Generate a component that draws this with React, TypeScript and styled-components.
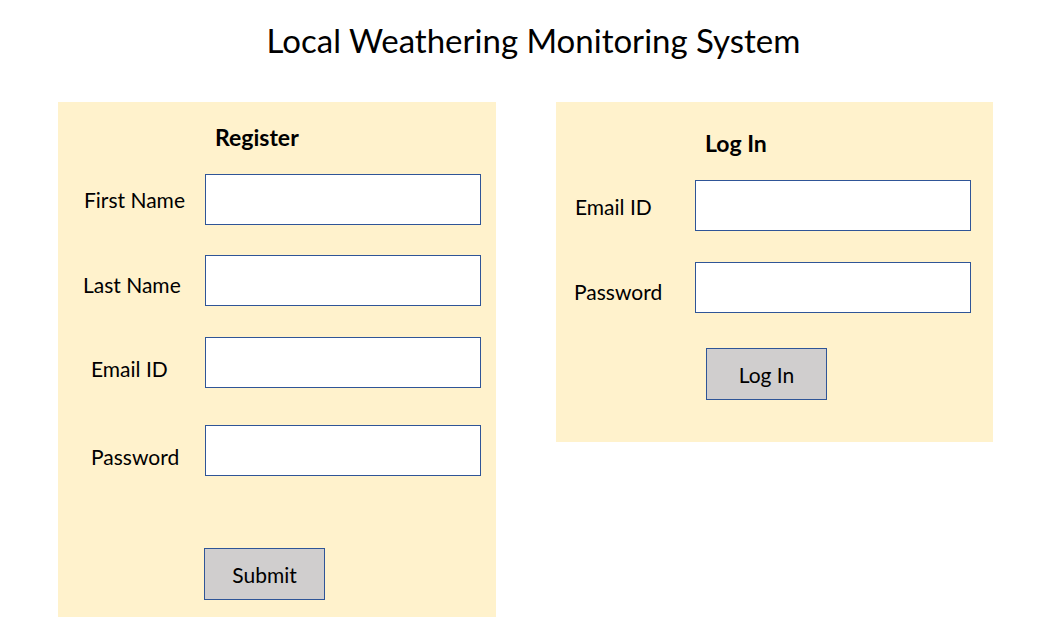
import styled, {createGlobalStyle} from "styled-components";

const GlobalStyle = createGlobalStyle`
  html, body {
    margin: 0;
    padding: 0;
    background: #ffffff;
  }
  body {
    font-family: Lato, "Open Sans", sans-serif;
    color: #000000;
  }
`;

const Page = styled.div`
  width: 1053px;
  height: 628px;
  box-sizing: border-box;
  padding: 18px 0 0 58px;
  overflow: hidden;
`;

const Title = styled.h1`
  margin: 0 0 40px 0;
  padding-left: 8px;
  width: 935px;
  text-align: center;
  font-size: 33px;
  font-weight: 400;
  line-height: 44px;
`;

const Panels = styled.div`
  display: flex;
  align-items: flex-start;
  gap: 60px;
`;

const Panel = styled.section`
  width: ${(p: {$width: number; $height: number}) => p.$width}px;
  height: ${(p: {$width: number; $height: number}) => p.$height}px;
  box-sizing: border-box;
  background: #fff2cc;
  display: flex;
  flex-direction: column;
`;

const Heading = styled.h2`
  margin: 0;
  padding-top: ${(p: {$top: number; $indent: number}) => p.$top}px;
  padding-left: ${(p: {$top: number; $indent: number}) => p.$indent}px;
  font-size: 23px;
  font-weight: 700;
  line-height: 24px;
`;

const Row = styled.div`
  display: grid;
  grid-template-columns: ${(p: {$top: number; $inputX: number}) => p.$inputX}px 276px;
  align-items: center;
  margin-top: ${(p: {$top: number; $inputX: number}) => p.$top}px;
`;

const Label = styled.label`
  padding-left: ${(p: {$dx: number; $dy: number}) => p.$dx}px;
  padding-top: ${(p: {$dx: number; $dy: number}) => p.$dy * 2}px;
  font-size: 21px;
  line-height: 24px;
  white-space: nowrap;
`;

const Input = styled.input`
  height: 51px;
  width: 276px;
  box-sizing: border-box;
  border: 1px solid #2f5597;
  background: #ffffff;
  outline: none;
  font: inherit;
  padding: 0 8px;
`;

const Button = styled.button`
  margin-top: ${(p: {$top: number; $left: number}) => p.$top}px;
  margin-left: ${(p: {$top: number; $left: number}) => p.$left}px;
  width: 121px;
  height: 52px;
  box-sizing: border-box;
  border: 1px solid #2f5597;
  background: #d0cece;
  font-family: Lato, "Open Sans", sans-serif;
  font-size: 21px;
  color: #000000;
  cursor: pointer;
  padding: 0;
`;

interface FieldProps {
  label: string;
  top: number;
  inputX: number;
  dx: number;
  dy: number;
  type?: string;
}

const Field = ({label, top, inputX, dx, dy, type = "text"}: FieldProps) => (
  <Row $top={top} $inputX={inputX}>
    <Label $dx={dx} $dy={dy}>
      {label}
    </Label>
    <Input type={type} />
  </Row>
);

export default function App() {
  return (
    <Page>
      <GlobalStyle />
      <Title>Local Weathering Monitoring System</Title>
      <Panels>
        <Panel $width={438} $height={515}>
          <Heading $top={23} $indent={157}>
            Register
          </Heading>
          <Field label="First Name" top={25} inputX={147} dx={26} dy={0} />
          <Field label="Last Name" top={30} inputX={147} dx={25} dy={4} />
          <Field label="Email ID" top={31} inputX={147} dx={33} dy={6} />
          <Field label="Password" top={37} inputX={147} dx={33} dy={6} type="password" />
          <Button $top={72} $left={146}>Submit</Button>
        </Panel>
        <Panel $width={437} $height={340}>
          <Heading $top={29} $indent={149}>
            Log In
          </Heading>
          <Field label="Email ID" top={25} inputX={139} dx={19} dy={1} />
          <Field label="Password" top={31} inputX={139} dx={18} dy={4} type="password" />
          <Button $top={35} $left={150}>Log In</Button>
        </Panel>
      </Panels>
    </Page>
  );
}
